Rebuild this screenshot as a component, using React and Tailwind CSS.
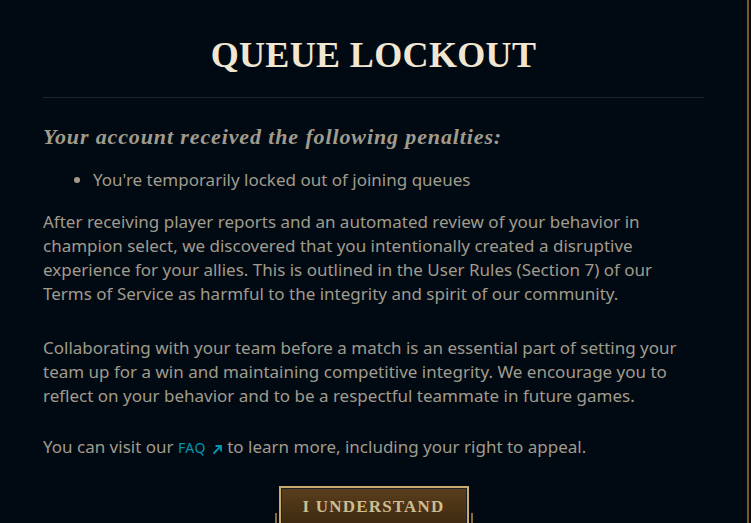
export default function App() {
  return (
    <div className="h-[523px] w-[751px] overflow-hidden bg-[#010a13]">
      <div className="h-full w-[749px] border-r-2 border-[#785a28] px-[43px] pt-[33px] font-['Noto_Sans',sans-serif] text-[#a09b8c]">
        <h1 className="text-center font-['Liberation_Serif',serif] text-[36px] font-bold leading-[44px] tracking-[0.01em] text-[#f0e6d2]">
          QUEUE LOCKOUT
        </h1>
        <div className="mt-[20px] h-px w-full bg-[#1e2328]" />
        <h2 className="mt-[25px] font-['Liberation_Serif',serif] text-[22px] font-bold italic leading-[28px] tracking-[0.04em]">
          Your account received the following penalties:
        </h2>
        <ul className="mt-[17px] list-disc pl-[50px] text-[17px] leading-[24px]">
          <li>You're temporarily locked out of joining queues</li>
        </ul>
        <p className="mt-[18px] text-[17px] leading-[24px]">
          After receiving player reports and an automated review of your behavior in champion select, we discovered that you intentionally created a disruptive experience for your allies. This is outlined in the User Rules (Section 7) of our Terms of Service as harmful to the integrity and spirit of our community.
        </p>
        <p className="mt-[30px] text-[17px] leading-[24px]">
          Collaborating with your team before a match is an essential part of setting your team up for a win and maintaining competitive integrity. We encourage you to reflect on your behavior and to be a respectful teammate in future games.
        </p>
        <p className="mt-[27px] text-[17px] leading-[24px]">
          You can visit our{" "}
          <a className="inline-flex items-center gap-[6px] text-[14px] tracking-[0.03em] text-[#0397ab]">
            FAQ
            <svg width="11" height="11" viewBox="0 0 11 11" fill="none" stroke="#0397ab" strokeWidth="1.8" className="mt-[3px]">
              <path d="M1.5 9.5 L9 2 M3.5 2 H9 V7.5" />
            </svg>
          </a>{" "}
          to learn more, including your right to appeal.
        </p>
        <div className="mt-[26px] flex justify-center">
          <div className="relative">
            <div className="absolute left-[-4px] top-[27px] h-[20px] w-[2px] bg-[#8c6a34]" />
            <div className="absolute right-[-4px] top-[27px] h-[20px] w-[2px] bg-[#8c6a34]" />
            <div className="w-[190px] border-2 border-[#c8aa6e] bg-[#1e2328] p-px">
              <div className="flex h-[40px] items-center justify-center bg-gradient-to-b from-[#5a3d1c] to-[#3a2810] pb-[4px] font-['Liberation_Serif',serif] text-[17px] font-bold tracking-[0.07em] text-[#cdbe91]">
                I UNDERSTAND
              </div>
            </div>
          </div>
        </div>
      </div>
    </div>
  );
}
